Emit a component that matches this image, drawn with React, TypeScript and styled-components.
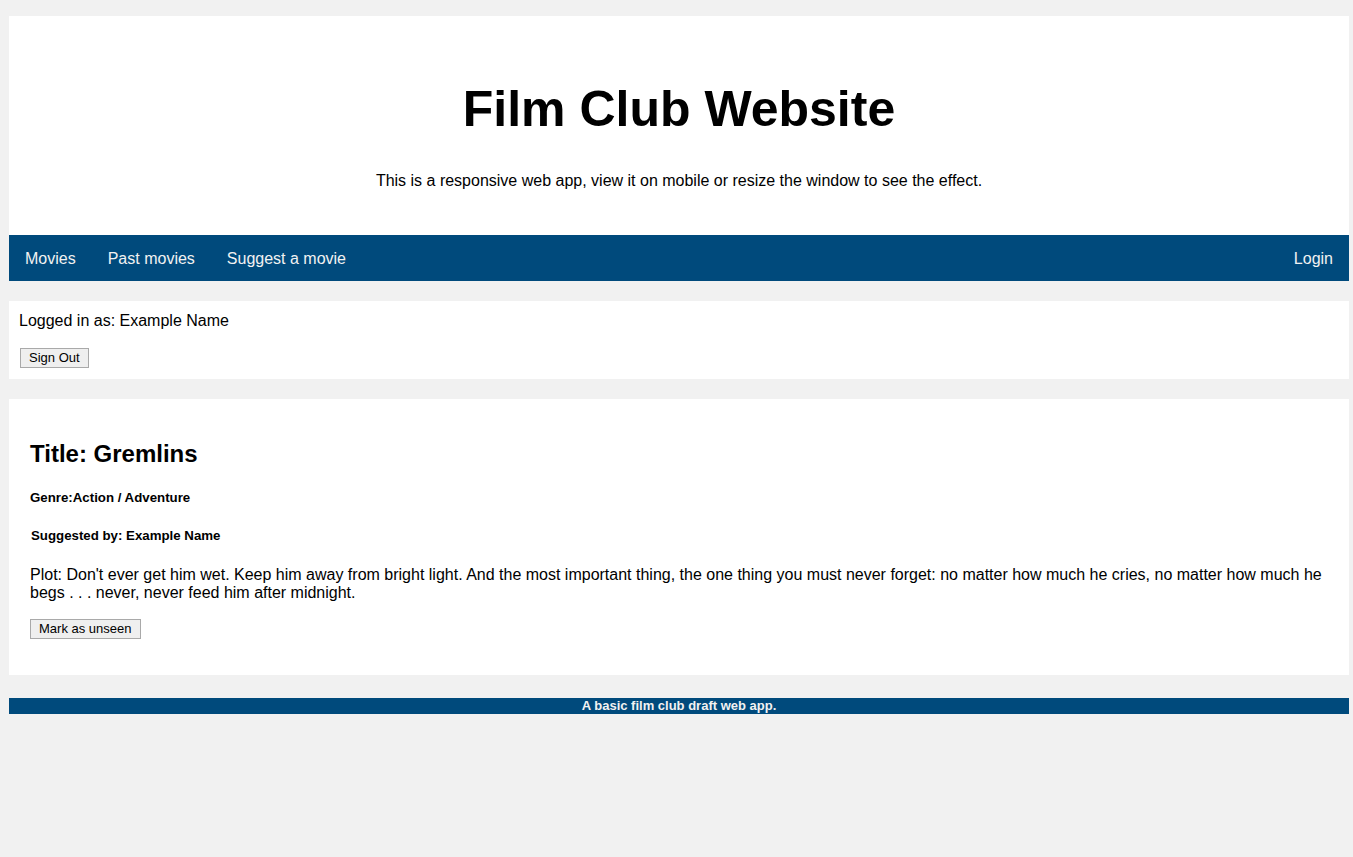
import styled, { createGlobalStyle } from "styled-components";

const GlobalStyle = createGlobalStyle`
  body {
    margin: 0;
    background: #f1f1f1;
    font-family: "Liberation Sans", Arial, sans-serif;
    color: #000;
  }
`;

const Page = styled.div`
  padding: 16px 4px 0 9px;
`;

const Header = styled.header`
  background: #fff;
  text-align: center;
  padding: 1px 0;
  height: 217px;
`;

const Title = styled.h1`
  font-size: 50px;
  font-weight: bold;
  margin: 67px 0 0;
  line-height: 50px;
`;

const Subtitle = styled.p`
  font-size: 16px;
  margin: 38px 0 0;
  line-height: 18px;
`;

const Nav = styled.nav`
  display: flex;
  background: #004a7c;
  height: 46px;
`;

const NavLink = styled.a<{ $right?: boolean }>`
  display: block;
  color: #f2f2f2;
  font-size: 16px;
  line-height: 18px;
  padding: 15px 16px 13px;
  text-decoration: none;
  margin-left: ${(p) => (p.$right ? "auto" : "0")};
`;

const Panel = styled.section`
  background: #fff;
  margin-top: 20px;
  padding: 11px 10px 0;
  height: 67px;
`;

const PanelText = styled.p`
  margin: 0;
  font-size: 16px;
  line-height: 18px;
`;

const Button = styled.button`
  font-family: "Liberation Sans", Arial, sans-serif;
  font-size: 13px;
  background: #efefef;
  border: 1px solid #a9a9a9;
  padding: 1px 8px;
  height: 20px;
  line-height: 16px;
  color: #000;
`;

const SignOut = styled(Button)`
  margin-top: 18px;
  margin-left: 1px;
`;

const Card = styled.section`
  background: #fff;
  margin-top: 20px;
  padding: 1px 21px 0;
  height: 275px;
`;

const MovieTitle = styled.h2`
  font-size: 24px;
  line-height: 28px;
  margin: 40px 0 0;
`;

const Meta = styled.h5<{ $indent?: number; $gap: number }>`
  font-size: 13.28px;
  line-height: 15px;
  margin: ${(p) => p.$gap}px 0 0 ${(p) => p.$indent ?? 0}px;
`;

const Plot = styled.p`
  font-size: 16px;
  line-height: 18px;
  margin: 23px 0 0;
`;

const Unseen = styled(Button)`
  margin-top: 17px;
`;

const Footer = styled.footer`
  background: #004a7c;
  color: #f2f2f2;
  margin-top: 23px;
  text-align: center;
  font-size: 13px;
  font-weight: bold;
  line-height: 16px;
  height: 16px;
`;

export default function App() {
  return (
    <Page>
      <GlobalStyle />
      <Header>
        <Title>Film Club Website</Title>
        <Subtitle>
          This is a responsive web app, view it on mobile or resize the window
          to see the effect.
        </Subtitle>
      </Header>
      <Nav>
        <NavLink href="#">Movies</NavLink>
        <NavLink href="#">Past movies</NavLink>
        <NavLink href="#">Suggest a movie</NavLink>
        <NavLink href="#" $right>
          Login
        </NavLink>
      </Nav>
      <Panel>
        <PanelText>Logged in as: Example Name</PanelText>
        <SignOut>Sign Out</SignOut>
      </Panel>
      <Card>
        <MovieTitle>Title: Gremlins</MovieTitle>
        <Meta $gap={22}>Genre:Action / Adventure</Meta>
        <Meta $gap={23} $indent={1}>
          Suggested by: Example Name
        </Meta>
        <Plot>
          Plot: Don't ever get him wet. Keep him away from bright light. And the
          most important thing, the one thing you must never forget: no matter
          how much he cries, no matter how much he begs . . . never, never feed
          him after midnight.
        </Plot>
        <Unseen>Mark as unseen</Unseen>
      </Card>
      <Footer>A basic film club draft web app.</Footer>
    </Page>
  );
}
